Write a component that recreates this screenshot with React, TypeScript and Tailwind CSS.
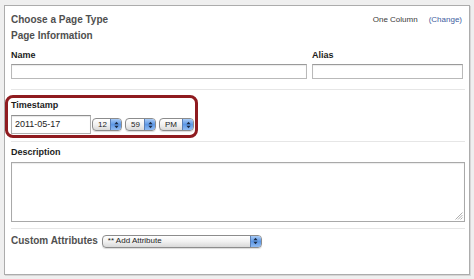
import React from "react";

const font = { fontFamily: '"Liberation Sans", Arial, Helvetica, sans-serif' };

const Arrows = ({ className = "" }: { className?: string }) => (
    <svg viewBox="0 0 6 9" className={className}>
        <path d="M3 0.5 L5.5 3.5 L0.5 3.5 Z" fill="#1b2a44" />
        <path d="M3 8.5 L5.5 5.5 L0.5 5.5 Z" fill="#1b2a44" />
    </svg>
);

const AquaSelect = ({
    label,
    className = ""
}: {
    label: string;
    className?: string;
}) => (
    <div
        className={`flex items-stretch h-[13px] rounded-[4px] border border-[#8c8c8c] overflow-hidden bg-gradient-to-b from-[#ffffff] via-[#f1f1f1] to-[#d9d9d9] shadow-[0_1px_1px_rgba(0,0,0,0.15)] ${className}`}
    >
        <span className="flex-1 flex items-center pl-[5px] text-[8px] leading-none text-[#222]">
            {label}
        </span>
        <span className="w-[11px] flex items-center justify-center bg-gradient-to-b from-[#a9cbf5] via-[#5d98e6] to-[#8fbaf1] border-l border-[#5b7fb5]">
            <Arrows className="w-[5px] h-[8px]" />
        </span>
    </div>
);

const Label = ({ children }: { children: React.ReactNode }) => (
    <div className="text-[9px] leading-[12px] font-bold text-[#1c1c1c]">
        {children}
    </div>
);

const TextInput = ({ className = "" }: { className?: string }) => (
    <div
        className={`h-[15px] bg-white border border-[#b9b9b9] border-t-[#9a9a9a] shadow-[inset_0_1px_1px_rgba(0,0,0,0.08)] ${className}`}
    />
);

const Rule = ({ className = "" }: { className?: string }) => (
    <div className={`h-px bg-[#e6e6e6] ${className}`} />
);

export default function App() {
    return (
        <div
            className="w-[474px] h-[279px] bg-[#efefef] pt-[5px] pl-[4px]"
            style={font}
        >
            <div className="w-[466px] h-[270px] bg-white border border-[#acacac] shadow-[1px_1px_0_#d6d6d6] pl-[6px] pr-[4px] pt-[6px]">
                {/* header */}
                <div className="flex justify-between items-start mr-[3px]">
                    <div className="text-[10px] leading-[16px] font-bold text-[#4f4f4f]">
                        <div>Choose a Page Type</div>
                        <div>Page Information</div>
                    </div>
                    <div className="text-[8px] leading-[16px] text-[#3a3a3a] flex gap-[11px]">
                        <span>One Column</span>
                        <span className="text-[#3e5ca0]">(Change)</span>
                    </div>
                </div>

                {/* name / alias */}
                <div className="grid grid-cols-[296px_151px] gap-x-[5px] mt-[5px]">
                    <Label>Name</Label>
                    <Label>Alias</Label>
                    <TextInput className="mt-[3px]" />
                    <TextInput className="mt-[3px]" />
                </div>

                <Rule className="mt-[10px]" />

                {/* timestamp highlight */}
                <div className="-ml-[6px] mt-[5px] w-[193px] border-[3px] border-[#8f1b1f] rounded-[8px] pl-[3px] pt-[1px] pb-[1px]">
                    <Label>Timestamp</Label>
                    <div className="flex items-center mt-[4px]">
                        <div className="w-[80px] h-[19px] bg-white border border-[#b0b0b0] border-t-[#8f8f8f] shadow-[inset_0_1px_1px_rgba(0,0,0,0.1)] pl-[3px] flex items-center text-[9px] text-[#222]">
                            2011-05-17
                        </div>
                        <AquaSelect label="12" className="w-[30px] ml-[1px]" />
                        <AquaSelect label="59" className="w-[31px] ml-[3px]" />
                        <AquaSelect label="PM" className="w-[35px] ml-[3px]" />
                    </div>
                </div>

                <Rule className="mt-[3px]" />

                {/* description */}
                <div className="mt-[4px]">
                    <Label>Description</Label>
                    <div className="relative mt-[4px] h-[60px] bg-white border border-[#a9a9a9] shadow-[inset_0_1px_1px_rgba(0,0,0,0.08)]">
                        <svg
                            viewBox="0 0 8 8"
                            className="absolute right-[1px] bottom-[1px] w-[8px] h-[8px]"
                        >
                            <path
                                d="M7.5 0.5 L0.5 7.5 M7.5 3 L3 7.5 M7.5 5.5 L5.5 7.5"
                                stroke="#9a9a9a"
                                strokeWidth="0.8"
                            />
                        </svg>
                    </div>
                </div>

                <Rule className="mt-[6px]" />

                {/* custom attributes */}
                <div className="flex items-center mt-[5px] gap-[4px]">
                    <span className="text-[10px] leading-[14px] font-bold text-[#505050]">
                        Custom Attributes
                    </span>
                    <AquaSelect label="** Add Attribute" className="w-[160px]" />
                </div>
            </div>
        </div>
    );
}
